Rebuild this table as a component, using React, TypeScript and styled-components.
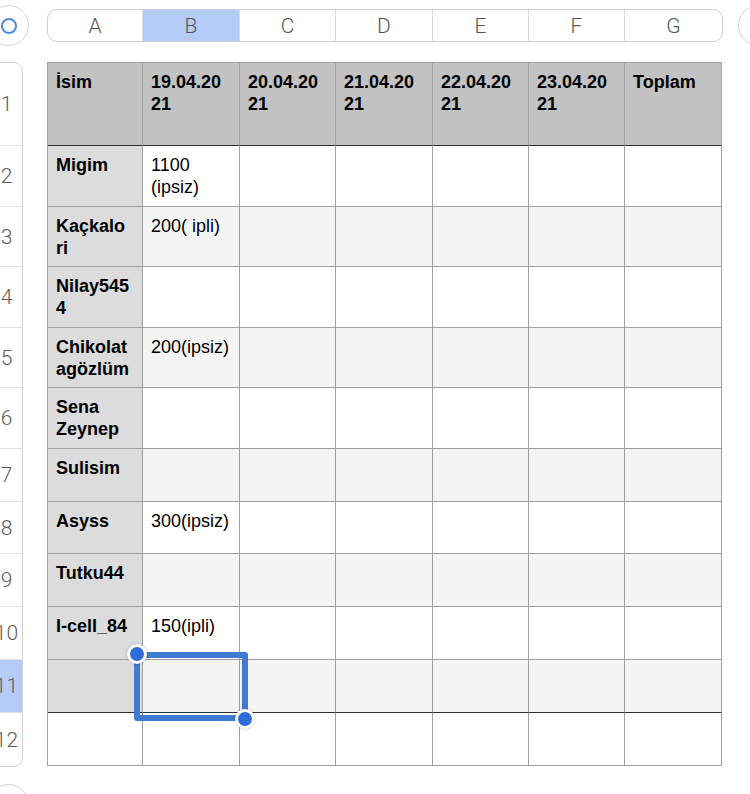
import React from 'react';
import styled, { createGlobalStyle } from 'styled-components';

const GlobalStyle = createGlobalStyle`
  html, body {
    margin: 0;
    padding: 0;
    background: #ffffff;
  }
  body {
    font-family: "Liberation Sans", Arial, sans-serif;
  }
`;

const columns = ['A', 'B', 'C', 'D', 'E', 'F', 'G'];
const colWidths = [95, 97, 96, 97, 96, 96, 97];
const rowHeights = [83, 61, 60, 61, 60, 61, 53, 52, 53, 53, 53, 53];
const gridCols = colWidths.map(w => `${w}px`).join(' ');
const gridRows = rowHeights.map(h => `${h}px`).join(' ');

const headings = ['İsim', '19.04.2021', '20.04.2021', '21.04.2021', '22.04.2021', '23.04.2021', 'Toplam'];

const people: [string, string][] = [
  ['Migim', '1100 (ipsiz)'],
  ['Kaçkalori', '200( ipli)'],
  ['Nilay5454', ''],
  ['Chikolatagözlüm', '200(ipsiz)'],
  ['Sena Zeynep', ''],
  ['Sulisim', ''],
  ['Asyss', '300(ipsiz)'],
  ['Tutku44', ''],
  ['I-cell_84', '150(ipli)'],
  ['', ''],
];

const Page = styled.div`
  width: 750px;
  height: 794px;
  overflow: hidden;
  padding-top: 5px;
  box-sizing: border-box;
`;

const TopRow = styled.div`
  display: flex;
  align-items: center;
  height: 41px;
`;

const RoundButton = styled.div<{ $edge?: 'left' | 'right' }>`
  flex: none;
  width: 41px;
  height: 41px;
  box-sizing: border-box;
  border-radius: 50%;
  border: 1px solid #d3d3d3;
  background: #fff;
  display: flex;
  align-items: center;
  justify-content: center;
  margin-left: ${p => (p.$edge === 'right' ? '15px' : '-12px')};
`;

const Ring = styled.div`
  width: 16px;
  height: 16px;
  box-sizing: border-box;
  border-radius: 50%;
  border: 2.5px solid #4a8de3;
`;

const ColumnBar = styled.div`
  flex: none;
  margin-left: 18px;
  display: grid;
  grid-template-columns: ${gridCols};
  height: 33px;
  box-sizing: border-box;
  border: 1px solid #cfcfcf;
  border-radius: 10px;
  overflow: hidden;
  background: #fff;
`;

const ColumnLetter = styled.div<{ $active?: boolean; $last?: boolean }>`
  display: flex;
  align-items: center;
  justify-content: center;
  border-right: ${p => (p.$last ? 'none' : '1px solid #dcdcdc')};
  background: ${p => (p.$active ? '#b5cdf6' : 'transparent')};
  font-family: Roboto, "Liberation Sans", sans-serif;
  font-weight: 300;
  font-size: 21px;
  color: #555;
`;

const Main = styled.div`
  display: flex;
  align-items: flex-start;
  margin-top: 16px;
`;

const RowRail = styled.div`
  flex: none;
  margin-left: -10px;
  width: 33px;
  box-sizing: border-box;
  border: 1px solid #d3d3d3;
  border-radius: 9px;
  overflow: hidden;
  background: #fff;
  display: grid;
  grid-template-rows: ${gridRows};
`;

const RowNumber = styled.div<{ $active?: boolean; $last?: boolean }>`
  box-sizing: border-box;
  display: flex;
  align-items: center;
  justify-content: center;
  border-bottom: ${p => (p.$last ? 'none' : '1px solid #e2e2e2')};
  background: ${p => (p.$active ? '#b5cdf6' : 'transparent')};
  font-family: Roboto, "Liberation Sans", sans-serif;
  font-weight: 300;
  font-size: 21px;
  color: #5c5c5c;
  white-space: nowrap;
`;

const SheetWrap = styled.div`
  position: relative;
  margin-left: 24px;
`;

const Sheet = styled.div`
  display: grid;
  grid-template-columns: ${gridCols};
  grid-template-rows: ${gridRows};
  border-top: 1px solid #a0a0a0;
  border-left: 1px solid #a0a0a0;
`;

type Kind = 'head' | 'label' | 'data';

const backgrounds: Record<Kind, string> = {
  head: '#c1c2c1',
  label: '#dcdcdc',
  data: '#ffffff',
};

const Cell = styled.div<{ $kind: Kind; $alt?: boolean; $rule?: boolean }>`
  box-sizing: border-box;
  min-width: 0;
  border-right: 1px solid #a0a0a0;
  border-bottom: 1px solid ${p => (p.$rule ? '#2f2f2f' : '#a0a0a0')};
  padding: 8px ${p => (p.$kind === 'data' ? 4 : 12)}px 8px 8px;
  font-size: 18px;
  line-height: 22px;
  font-weight: ${p => (p.$kind === 'data' ? 400 : 700)};
  color: #000;
  overflow-wrap: anywhere;
  background: ${p => (p.$kind === 'data' && p.$alt ? '#f4f4f4' : backgrounds[p.$kind])};
`;

const Selection = styled.div`
  position: absolute;
  left: 87px;
  top: 590px;
  width: 114px;
  height: 69px;
  box-sizing: border-box;
  border: 6px solid #3f7bd2;
  border-radius: 3px;
`;

const Handle = styled.div<{ $corner: 'start' | 'end' }>`
  position: absolute;
  width: 20px;
  height: 20px;
  box-sizing: border-box;
  border-radius: 50%;
  background: #2f6ddb;
  border: 3px solid #fff;
  box-shadow: 0 0 3px rgba(0, 0, 0, 0.25);
  ${p => (p.$corner === 'start' ? 'left: -13px; top: -14px;' : 'right: -13px; bottom: -14px;')}
`;

const BottomRow = styled.div`
  margin-top: 17px;
`;

const App: React.FC = () => {
  const lastRow = rowHeights.length - 1;

  return (
    <Page>
      <GlobalStyle />
      <TopRow>
        <RoundButton>
          <Ring />
        </RoundButton>
        <ColumnBar>
          {columns.map((c, i) => (
            <ColumnLetter key={c} $active={c === 'B'} $last={i === columns.length - 1}>
              {c}
            </ColumnLetter>
          ))}
        </ColumnBar>
        <RoundButton $edge="right" />
      </TopRow>

      <Main>
        <RowRail>
          {rowHeights.map((_, i) => (
            <RowNumber key={i} $active={i === 10} $last={i === lastRow}>
              {i + 1}
            </RowNumber>
          ))}
        </RowRail>

        <SheetWrap>
          <Sheet>
            {headings.map(h => (
              <Cell key={h} $kind="head" $rule>
                {h}
              </Cell>
            ))}
            {people.map(([name, value], r) => {
              const alt = r % 2 === 1;
              const rule = r === people.length - 1;
              return (
                <React.Fragment key={r}>
                  <Cell $kind="label" $rule={rule}>{name}</Cell>
                  <Cell $kind="data" $alt={alt} $rule={rule}>{value}</Cell>
                  {columns.slice(2).map(c => (
                    <Cell key={c} $kind="data" $alt={alt} $rule={rule} />
                  ))}
                </React.Fragment>
              );
            })}
            {columns.map(c => (
              <Cell key={`last-${c}`} $kind="data" />
            ))}
          </Sheet>
          <Selection>
            <Handle $corner="start" />
            <Handle $corner="end" />
          </Selection>
        </SheetWrap>
      </Main>

      <BottomRow>
        <RoundButton />
      </BottomRow>
    </Page>
  );
};

export default App;
